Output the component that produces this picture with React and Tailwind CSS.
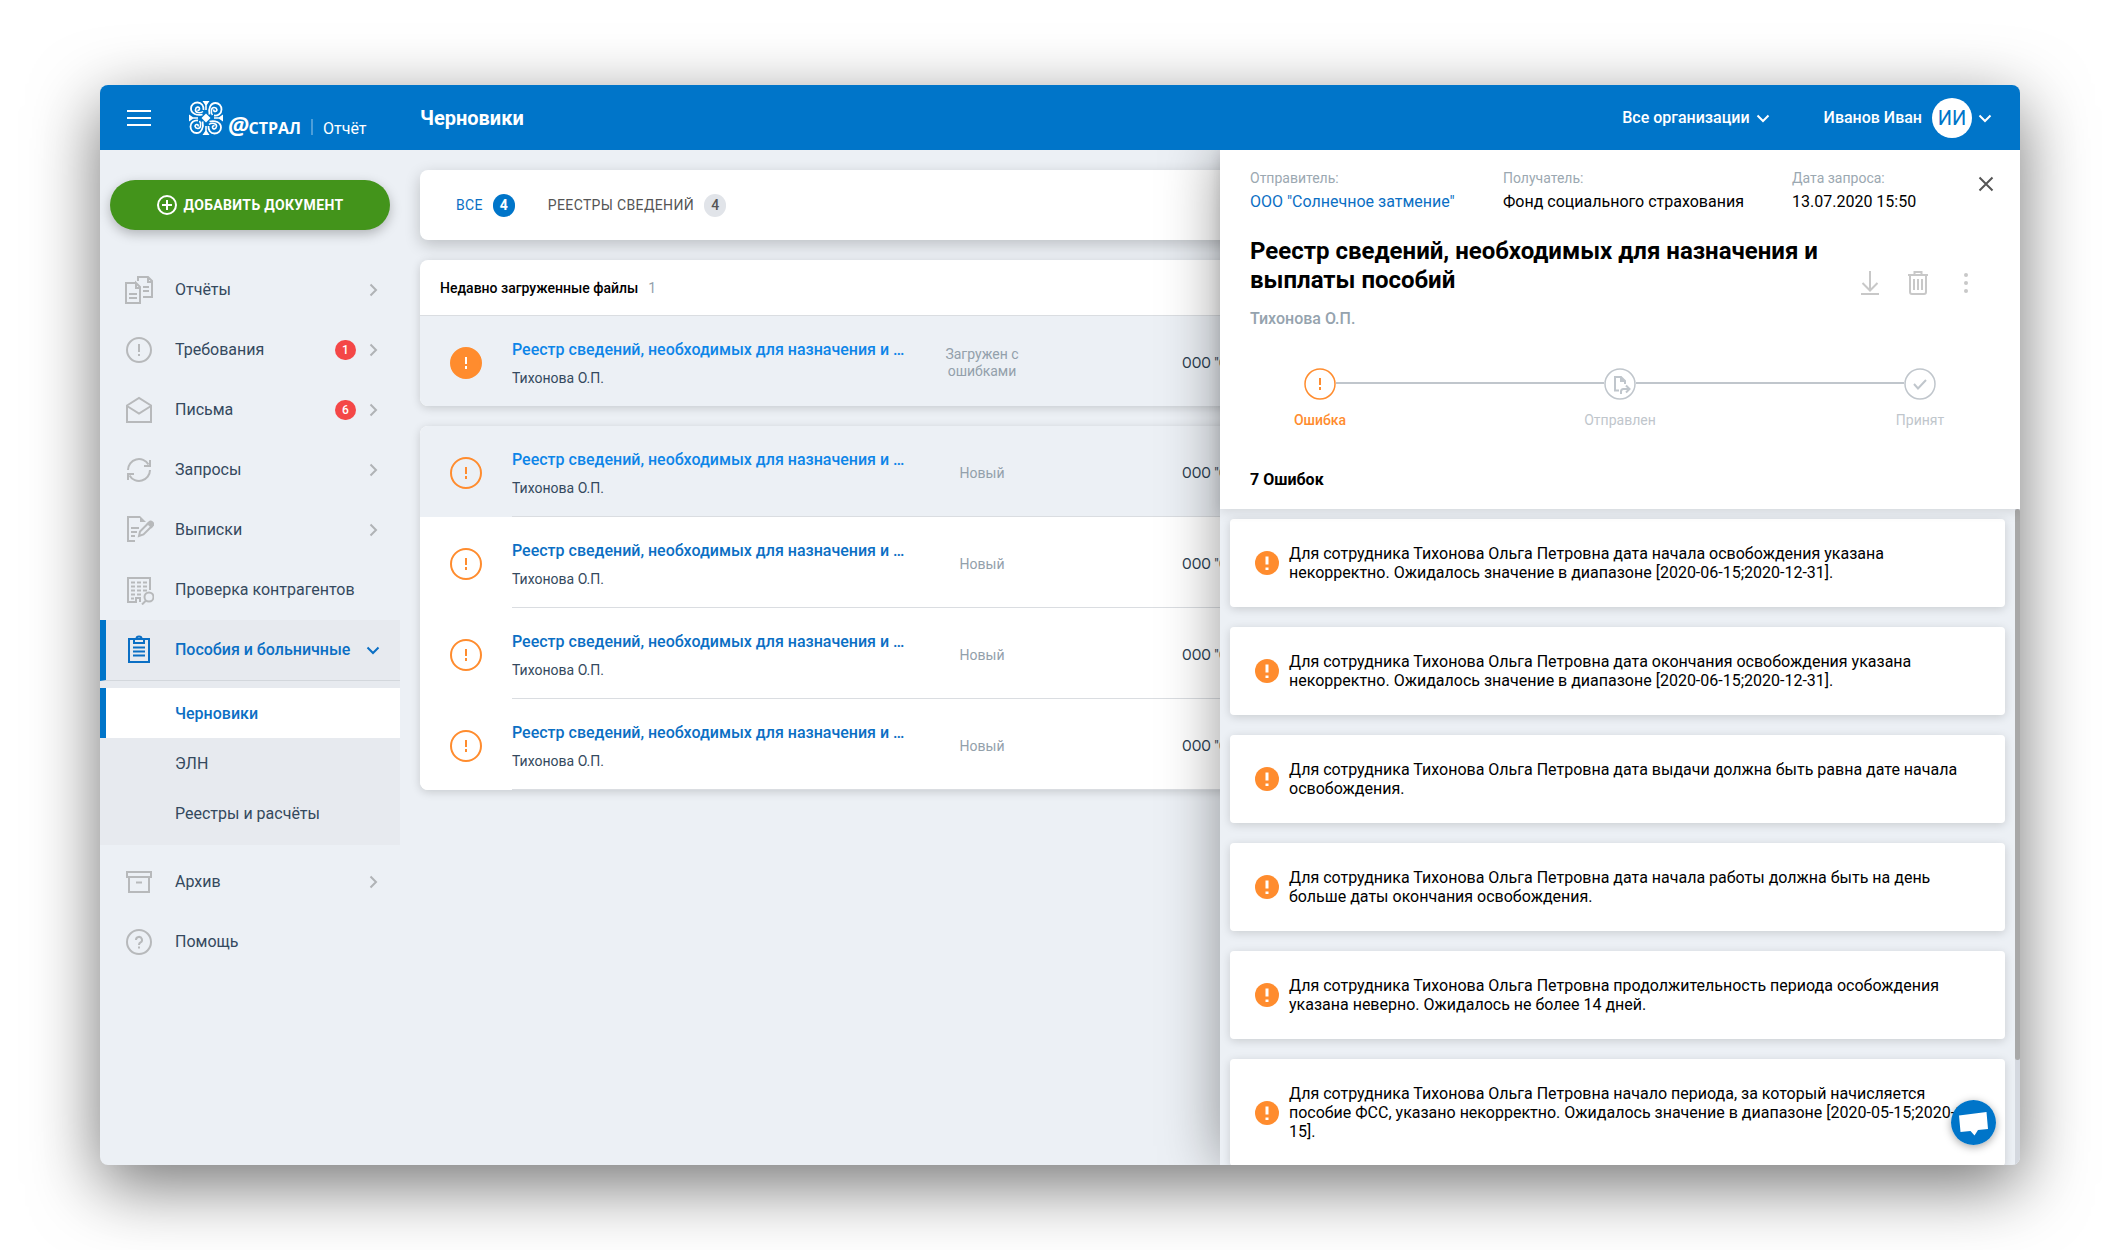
import { useState } from 'react';
import clsx from 'clsx';

const navItems = [
  { id: 'reports', label: 'Отчёты', icon: 'docs', arrow: true },
  { id: 'demands', label: 'Требования', icon: 'alert', arrow: true, count: 1 },
  { id: 'letters', label: 'Письма', icon: 'mail', arrow: true, count: 6 },
  { id: 'requests', label: 'Запросы', icon: 'refresh', arrow: true },
  { id: 'extracts', label: 'Выписки', icon: 'edit', arrow: true },
  { id: 'check', label: 'Проверка контрагентов', icon: 'search' },
];

const subItems = ['Черновики', 'ЭЛН', 'Реестры и расчёты'];

const drafts = [
  { id: 1, status: 'Новый', active: true },
  { id: 2, status: 'Новый' },
  { id: 3, status: 'Новый' },
  { id: 4, status: 'Новый' },
];

const errors = [
  'Для сотрудника Тихонова Ольга Петровна дата начала освобождения указана некорректно. Ожидалось значение в диапазоне [2020-06-15;2020-12-31].',
  'Для сотрудника Тихонова Ольга Петровна дата окончания освобождения указана некорректно. Ожидалось значение в диапазоне [2020-06-15;2020-12-31].',
  'Для сотрудника Тихонова Ольга Петровна дата выдачи должна быть равна дате начала освобождения.',
  'Для сотрудника Тихонова Ольга Петровна дата начала работы должна быть на день больше даты окончания освобождения.',
  'Для сотрудника Тихонова Ольга Петровна продолжительность периода особождения указана неверно. Ожидалось не более 14 дней.',
  'Для сотрудника Тихонова Ольга Петровна начало периода, за который начисляется пособие ФСС, указано некорректно. Ожидалось значение в диапазоне [2020-05-15;2020-12-15].',
];

const iconPaths = {
  docs: (
    <>
      <path d="M12 8H2v20h14V12l-4-4v5h4" />
      <path d="M5 19h8M5 23h8M14 6V2h10l4 4v16h-9M24 2v5h4M19 12h6M19 16h6" />
    </>
  ),
  alert: (
    <>
      <circle cx="15" cy="15" r="12" />
      <path d="M15 9v8M15 19v2" />
    </>
  ),
  mail: <path d="M3 10.5 15 3l12 7.5V27H3zM3 11l12 7.5L27 11" />,
  refresh: (
    <>
      <path d="M4 15a11 11 0 0 1 20.5-5.500M26 5v6h-6" />
      <path d="M26 15a11 11 0 0 1-20.5 5.500M4 25v-6h6" />
    </>
  ),
  edit: (
    <>
      <path d="M11 26H4V2h12M7 13h8M7 17h6M7 21h4" />
      <path d="M16 1l6 6h-6z" fill="currentColor" stroke="none" />
      <path d="M15 21l1-4.500 9-9a2 2 0 0 1 3.500 3l-9 9z" />
      <path d="M24 8.500l3.500 3.500 1.500-2-3-3z" fill="currentColor" />
    </>
  ),
  search: (
    <>
      <path d="M26 15V3H4v24h8v-4h4v4" />
      <path d="M7 7.500h4M13 7.500h4M19 7.500h4M7 11.500h4M13 11.500h4M19 11.500h4M7 15.500h4M13 15.500h4M19 15.500h4M7 19.500h4M13 19.500h4M7 23.500h3" />
      <circle cx="25" cy="22" r="4.500" />
      <path d="M22 25.500l-4 4" />
    </>
  ),
  clipboard: (
    <>
      <path d="M5 4h20v23H5zM10 4v4h10V4" />
      <path d="M12.500 3.500a2.500 2 0 0 1 5 0M9 12.500h12M9 16.500h12M9 20.500h12" />
    </>
  ),
  archive: <path d="M3 5h24v5H3zM5 10v15h20V10M12 15.500h6" />,
  help: (
    <>
      <circle cx="15" cy="15" r="12" />
      <path d="M12 13a3 3 0 1 1 4.500 2.500Q15 16.200 15 18M15 19.500v2" />
    </>
  ),
};

const NavIcon = ({ name }) => (
  <svg viewBox="0 0 30 30" className="w-[30px] h-[30px] shrink-0" fill="none" stroke="currentColor" strokeWidth="2" aria-hidden="true">
    {iconPaths[name]}
  </svg>
);

const Chevron = ({ down, className }) => (
  <svg viewBox="0 0 14 14" className={clsx('w-[14px] h-[14px] shrink-0', className)} fill="none" stroke="currentColor" strokeWidth="2" aria-hidden="true">
    <path d={down ? 'M1.500 4.500 7 10l5.500-5.500' : 'M4.500 1.500 10 7l-5.500 5.500'} />
  </svg>
);

const StatusIcon = ({ filled }) => (
  <svg viewBox="0 0 32 32" className="w-8 h-8 text-[#ff8c2e]" fill="none" aria-hidden="true">
    <circle cx="16" cy="16" r="15" fill={filled ? 'currentColor' : 'none'} stroke="currentColor" strokeWidth="2" />
    <path d="M16 10v7M16 19v3" stroke={filled ? '#fff' : 'currentColor'} strokeWidth="2" />
  </svg>
);

const Emblem = () => (
  <svg viewBox="0 0 34 34" className="w-[34px] h-[34px]" fill="none" stroke="#fff" aria-hidden="true">
    {[0, 90, 180, 270].map((angle) => (
      <g key={angle} transform={`rotate(${angle} 17 17)`}>
        <path d="M13.500 13.500C8 15 2 12.500 2 7.500 2 4 5 1.500 8.500 1.500c4 0 6.500 3.500 6 7.500" strokeWidth="1.800" />
        <path d="M14 10.500C11.500 12.500 6 12 6.500 8.500 6.800 6 10 5 10.500 7.500c.3 1.500-1 2-2 1.500" strokeWidth="1.600" />
        <path d="M13.500 0h7L17.800 4v5h-1.600V4z" fill="#fff" stroke="none" />
      </g>
    ))}
    <path d="M17 12.500l4.500 4.500-4.500 4.500-4.500-4.500z" fill="#fff" stroke="none" />
  </svg>
);

const NavItem = ({ item }) => (
  <a href={`#${item.id}`} className="flex h-[60px] items-center pl-6 pr-5 text-[#34495e]">
    <span className="text-[#b7b9bb]"><NavIcon name={item.icon} /></span>
    <span className="ml-[21px] flex-1 whitespace-nowrap">{item.label}</span>
    {item.count && (
      <span className="mr-[10px] flex h-5 w-[21px] items-center justify-center rounded-full bg-[#f44747] text-xs font-medium text-white">{item.count}</span>
    )}
    {item.arrow && <Chevron className="text-[#b0b3b6]" />}
  </a>
);

const DraftRow = ({ status, active, filled, bordered }) => {
  const line = bordered && 'border-b border-[#dadde1]';
  return (
    <tr className={active ? 'bg-[#ecf0f5]' : 'bg-white'}>
      <td className={clsx('w-[92px] pl-[30px] pt-[31px] align-top', bordered ? 'h-[91px]' : 'h-[90px]')}>
        <StatusIcon filled={filled} />
      </td>
      <td className={clsx('w-[420px] pt-[22px] align-top', line)}>
        <a href="#draft" className={clsx('block truncate font-medium leading-6', active ? 'text-[#0d85e8]' : 'text-[#0b6fc4]')}>
          Реестр сведений, необходимых для назначения и …
        </a>
        <div className="mt-[6px] text-sm text-[#34495e]">Тихонова О.П.</div>
      </td>
      <td className={clsx('w-[100px] pt-1 text-center text-sm leading-[17px] text-[#93a0ab]', line)}>{status}</td>
      <td className={clsx('whitespace-nowrap pl-[150px] pt-[3px] text-sm text-[#2c3e50]', line)}>ООО "Солнечное затмение"</td>
    </tr>
  );
};

const Step = ({ label, active, children }) => (
  <div className={clsx('flex w-8 flex-col items-center text-sm', active ? 'font-medium text-[#ff8c2e]' : 'text-[#c0c6cc]')}>
    <svg viewBox="0 0 32 32" className="h-8 w-8" fill="none" stroke="currentColor" strokeWidth="2" aria-hidden="true">
      <circle cx="16" cy="16" r="15" strokeWidth="1.500" />
      {children}
    </svg>
    <span className="mt-[10px] whitespace-nowrap">{label}</span>
  </div>
);

const Details = ({ onClose }) => (
  <aside className="absolute inset-y-0 right-0 z-10 flex w-[800px] flex-col bg-[#ecf0f5] shadow-[0_0_55px_rgba(0,0,0,0.4)]">
    <div className="relative z-10 bg-white px-[30px] pb-[17px] pt-[18px] shadow-[0_2px_12px_rgba(0,0,0,0.12)]">
      <div className="flex items-start">
        <dl className="flex flex-1">
          <div className="w-[253px]">
            <dt className="mb-[2px] text-sm text-[#9ba8b1]">Отправитель:</dt>
            <dd><a href="#sender" className="text-[#0b6fc4]">ООО "Солнечное затмение"</a></dd>
          </div>
          <div className="w-[289px]">
            <dt className="mb-[2px] text-sm text-[#9ba8b1]">Получатель:</dt>
            <dd className="text-black">Фонд социального страхования</dd>
          </div>
          <div>
            <dt className="mb-[2px] text-sm text-[#9ba8b1]">Дата запроса:</dt>
            <dd className="text-black">13.07.2020 15:50</dd>
          </div>
        </dl>
        <button type="button" onClick={onClose} aria-label="Закрыть" className="-mr-1 mt-2 text-[#555]">
          <svg viewBox="0 0 16 16" className="h-4 w-4" fill="none" stroke="currentColor" strokeWidth="2">
            <path d="M1.500 1.500l13 13M14.500 1.500l-13 13" />
          </svg>
        </button>
      </div>

      <div className="mt-[23px] flex items-end justify-between">
        <h2 className="w-[580px] text-2xl font-bold leading-[29px] text-black">Реестр сведений, необходимых для назначения и выплаты пособий</h2>
        <div className="flex gap-6 pr-3 text-[#c8c8c8]">
          <button type="button" aria-label="Скачать">
            <svg viewBox="0 0 24 24" className="h-6 w-6" fill="none" stroke="currentColor" strokeWidth="2">
              <path d="M12 0v19M4.500 12l7.500 7.500 7.500-7.500M3 23h18" />
            </svg>
          </button>
          <button type="button" aria-label="Удалить">
            <svg viewBox="0 0 24 24" className="h-6 w-6" fill="none" stroke="currentColor" strokeWidth="2">
              <path d="M2 4h20M8.500 4V1h7v3M4 4v17q0 2 2 2h12q2 0 2-2V4M8 8v11M12 8v11M16 8v11" />
            </svg>
          </button>
          <button type="button" aria-label="Ещё">
            <svg viewBox="0 0 24 24" className="h-6 w-6" fill="currentColor">
              <circle cx="12" cy="4" r="2" />
              <circle cx="12" cy="12" r="2" />
              <circle cx="12" cy="20" r="2" />
            </svg>
          </button>
        </div>
      </div>
      <div className="mt-3 font-medium text-[#95a3ae]">Тихонова О.П.</div>

      <div className="mt-[37px] flex px-[54px]">
        <Step label="Ошибка" active>
          <path d="M16 10v7M16 19v3" />
        </Step>
        <div className="mt-[14px] h-[2px] flex-1 bg-[#c0c6cc]" />
        <Step label="Отправлен">
          <path d="M15 22.500h-4V9h6l4 4v3M17 9v4h4M17 26v-2.500q0-2.500 2.500-2.500H25M22 17.500l3.500 3.500-3.500 3.500" />
        </Step>
        <div className="mt-[14px] h-[2px] flex-1 bg-[#c0c6cc]" />
        <Step label="Принят">
          <path d="M10 16l4 4.500L22 12" />
        </Step>
      </div>

      <h3 className="mt-[38px] font-bold text-black">7 Ошибок</h3>
    </div>

    <div className="flex min-h-0 flex-1">
      <ul className="flex min-w-0 flex-1 flex-col gap-5 overflow-hidden p-[10px]">
        {errors.map((text) => (
          <li key={text} className="flex shrink-0 items-center gap-[10px] rounded bg-white p-[25px] leading-[19px] text-black shadow-[0_2px_10px_rgba(0,0,0,0.15)]">
            <svg viewBox="0 0 24 24" className="h-6 w-6 shrink-0" aria-hidden="true">
              <circle cx="12" cy="12" r="12" fill="#ff8c2e" />
              <path d="M12 5.500v8M12 16.500v2.500" stroke="#fff" strokeWidth="3" />
            </svg>
            <p>{text}</p>
          </li>
        ))}
      </ul>
      {/* Scrollbar */}
      <div className="w-[5px] bg-[#d4d8df]">
        <div className="h-[84%] rounded-sm bg-[#a8a8a8]" />
      </div>
    </div>
  </aside>
);

const App = () => {
  const [open, setOpen] = useState(true);

  return (
    <div className="h-screen bg-white px-[100px] py-[85px] font-['Roboto',sans-serif] text-base">
      <div className="flex h-full flex-col overflow-hidden rounded-lg bg-[#ecf0f5] shadow-[0_20px_68px_rgba(0,0,0,0.55)]">
        {/* Header */}
        <header className="flex h-[65px] shrink-0 items-center bg-[#0075c9] text-white">
          <div className="flex w-[320px] items-center pl-[27px]">
            <button type="button" aria-label="Меню">
              <svg viewBox="0 0 24 18" className="h-[18px] w-6" stroke="currentColor" strokeWidth="2">
                <path d="M0 2h24M0 9h24M0 16h24" />
              </svg>
            </button>
            <a href="#home" className="ml-[38px] flex items-end">
              <Emblem />
              <span className="ml-[5px] flex h-5 items-baseline font-['Open_Sans',sans-serif] font-bold leading-5">
                <span className="text-2xl leading-5 italic">@</span>
                <span>СТРАЛ</span>
              </span>
              <span className="ml-[10px] h-4 border-l-2 border-white/30" />
              <span className="ml-[10px] h-4 leading-5">Отчёт</span>
            </a>
          </div>
          <h1 className="flex-1 text-xl font-bold">Черновики</h1>
          <button type="button" className="flex items-center gap-[6px] font-medium">
            Все организации
            <Chevron down />
          </button>
          <button type="button" className="ml-[54px] mr-7 flex items-center font-medium">
            Иванов Иван
            <span className="ml-[10px] mr-[6px] flex h-10 w-10 items-center justify-center rounded-full bg-white text-xl font-normal text-[#0075c9]">ИИ</span>
            <Chevron down />
          </button>
        </header>

        <div className="relative flex min-h-0 flex-1 overflow-hidden">
          {/* Sidebar */}
          <div className="w-[300px] shrink-0">
            <div className="px-[10px] pt-[30px]">
              <button type="button" className="flex h-[50px] w-full items-center justify-center gap-[7px] rounded-full bg-[#43941b] text-sm font-bold tracking-wide text-white shadow-[0_4px_12px_rgba(0,0,0,0.25)]">
                <svg viewBox="0 0 20 20" className="h-5 w-5" fill="none" stroke="currentColor" strokeWidth="2" aria-hidden="true">
                  <circle cx="10" cy="10" r="9" />
                  <path d="M10 5v10M5 10h10" />
                </svg>
                ДОБАВИТЬ ДОКУМЕНТ
              </button>
            </div>
            <nav className="mt-[30px]">
              {navItems.map((item) => (
                <NavItem key={item.id} item={item} />
              ))}
              <div className="mb-[7px] bg-[#e7eaef] pb-[7px]">
                <a href="#benefits" className="flex h-[61px] items-center border-b border-l-[6px] border-b-[#d3d7dc] border-l-[#0075c9] pl-[18px] pr-5 font-medium text-[#0b6fc4]">
                  <NavIcon name="clipboard" />
                  <span className="ml-[21px] flex-1 whitespace-nowrap">Пособия и больничные</span>
                  <Chevron down />
                </a>
                <ul className="pt-[7px]">
                  {subItems.map((label, idx) => (
                    <li key={label}>
                      <a
                        href="#sub"
                        className={clsx(
                          'flex h-[50px] items-center border-l-[6px] pl-[69px] pt-[2px]',
                          idx === 0 ? 'border-[#0075c9] bg-white font-medium text-[#0b6fc4]' : 'border-transparent text-[#34495e]'
                        )}
                      >
                        {label}
                      </a>
                    </li>
                  ))}
                </ul>
              </div>
              <NavItem item={{ id: 'archive', label: 'Архив', icon: 'archive', arrow: true }} />
              <NavItem item={{ id: 'help', label: 'Помощь', icon: 'help' }} />
            </nav>
          </div>

          {/* Drafts */}
          <main className="flex min-w-0 flex-1 flex-col gap-5 p-5">
            <div className="flex h-[70px] shrink-0 items-center gap-[33px] rounded-lg bg-white px-9 text-sm shadow-[0_5px_16px_rgba(0,0,0,0.2)]">
              <button type="button" className="flex items-center gap-[10px] tracking-wide text-[#0b6fc4]">
                ВСЕ
                <span className="flex h-[23px] w-[22px] items-center justify-center rounded-full bg-[#0075c9] font-bold tracking-normal text-white">4</span>
              </button>
              <button type="button" className="flex items-center gap-[10px] tracking-wide text-[#555]">
                РЕЕСТРЫ СВЕДЕНИЙ
                <span className="flex h-[23px] w-[22px] items-center justify-center rounded-full bg-[#e1e4e9] font-medium tracking-normal">4</span>
              </button>
            </div>

            <section className="shrink-0 overflow-hidden rounded-lg bg-white shadow-[0_2px_10px_rgba(0,0,0,0.16)]">
              <h2 className="flex h-14 items-center gap-[10px] border-b border-[#dadde1] px-5 text-sm font-medium text-black">
                Недавно загруженные файлы
                <span className="font-normal text-[#93a0ab]">1</span>
              </h2>
              <table className="w-full table-fixed border-separate border-spacing-0">
                <tbody>
                  <DraftRow status="Загружен с ошибками" active filled />
                </tbody>
              </table>
            </section>

            <section className="shrink-0 overflow-hidden rounded-lg bg-white shadow-[0_2px_10px_rgba(0,0,0,0.16)]">
              <table className="w-full table-fixed border-separate border-spacing-0">
                <tbody>
                  {drafts.map((draft) => (
                    <DraftRow key={draft.id} status={draft.status} active={draft.active} bordered />
                  ))}
                </tbody>
              </table>
            </section>
          </main>

          {open && <Details onClose={() => setOpen(false)} />}

          {/* Chat */}
          <button type="button" aria-label="Чат" className="absolute bottom-5 right-6 z-20 rounded-full shadow-[0_2px_8px_rgba(0,0,0,0.35)]">
            <svg viewBox="0 0 45 45" className="h-[45px] w-[45px]">
              <circle cx="22.500" cy="22.500" r="22.500" fill="#0075c9" />
              <path d="M8 15.500 35.500 12 37 29l-10 1-3.500 5.500-4-4.500L9.500 32z" fill="#fff" />
            </svg>
          </button>
        </div>
      </div>
    </div>
  );
};

export default App;
